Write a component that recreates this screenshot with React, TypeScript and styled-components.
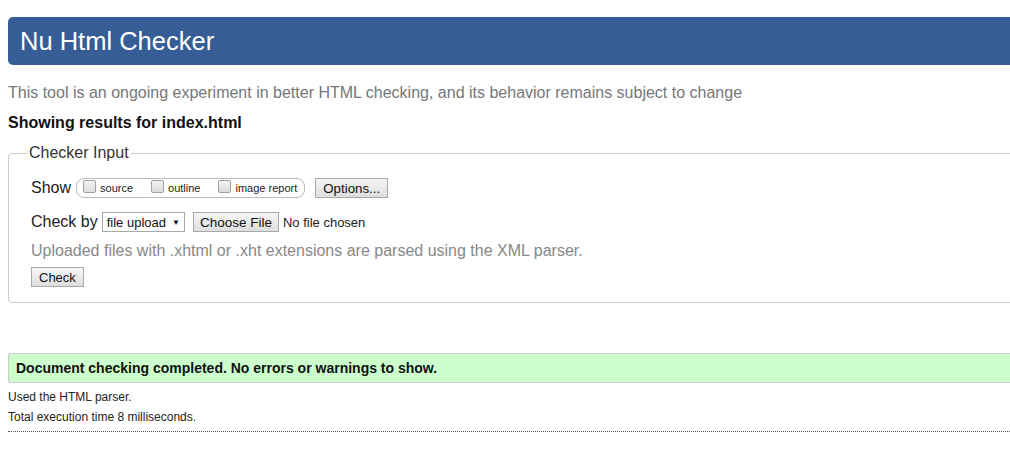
import React from "react";
import styled, { createGlobalStyle } from "styled-components";

const GlobalStyle = createGlobalStyle`
  html, body {
    margin: 0;
    padding: 0;
    background: #fff;
    overflow: hidden;
  }
  body {
    font-family: "Liberation Sans", Arial, sans-serif;
    color: #222;
  }
`;

const Page = styled.div`
  width: 1040px;
  padding: 17px 0 0 8px;
`;

const Header = styled.h1`
  margin: 0;
  height: 48px;
  background: #365d95;
  border-radius: 5px;
  color: #fff;
  font-size: 25.5px;
  font-weight: normal;
  line-height: 48px;
  padding-left: 12px;
`;

const Intro = styled.p`
  margin: 18px 0 0;
  color: #777;
  font-size: 16px;
  line-height: 20px;
`;

const Results = styled.p`
  margin: 10px 0 0;
  font-size: 16px;
  font-weight: bold;
  line-height: 20px;
  color: #111;
`;

const Fieldset = styled.fieldset`
  margin: 11px 0 0;
  padding: 4px 22px 15px;
  border: 1px solid #ccc;
  border-radius: 4px;
  min-width: 0;
`;

const Legend = styled.legend`
  padding: 0 2px;
  margin-left: -4px;
  font-size: 16px;
  color: #333;
  line-height: 18px;
`;

const Row = styled.div<{ $top?: number }>`
  display: flex;
  align-items: center;
  gap: 4px;
  margin-top: ${(p) => p.$top ?? 0}px;
  font-size: 16px;
  color: #222;
`;

const Label = styled.span`
  font-size: 16px;
`;

const Pill = styled.span`
  display: inline-flex;
  align-items: center;
  gap: 18px;
  height: 18px;
  padding: 0 7px 0 6px;
  margin-left: 1px;
  border: 1px solid #bbb;
  border-radius: 8px;
  font-size: 11px;
`;

const Option = styled.label`
  display: inline-flex;
  align-items: center;
  gap: 4px;
`;

const Box = styled.span`
  display: inline-block;
  width: 11px;
  height: 11px;
  border: 1px solid #a0a0a0;
  border-radius: 2px;
  background: linear-gradient(#f4f4f4, #dcdcdc);
  position: relative;
  top: -2px;
`;

const Button = styled.button<{ $left?: number; $size?: number; $pad?: number }>`
  font-family: "Liberation Sans", Arial, sans-serif;
  font-size: ${(p) => p.$size ?? 13}px;
  color: #111;
  height: 20px;
  padding: 0 ${(p) => p.$pad ?? 7}px;
  border: 1px solid #a9a9a9;
  border-radius: 0;
  background: linear-gradient(#f6f6f6, #dedede);
  margin-left: ${(p) => p.$left ?? 0}px;
`;

const Select = styled.span`
  display: inline-flex;
  align-items: center;
  gap: 6px;
  height: 18px;
  padding: 0 4px;
  border: 1px solid #a9a9a9;
  font-size: 13px;
  color: #111;
  background: #fff;
`;

const Caret = styled.span`
  font-size: 8px;
`;

const Small = styled.span`
  font-size: 13px;
`;

const Hint = styled.p`
  margin: 9px 0 0;
  color: #888;
  font-size: 16px;
  line-height: 20px;
`;

const Success = styled.div`
  margin-top: 50px;
  height: 28px;
  background: #ccffcc;
  border: 1px solid #ccc;
  border-right: none;
  border-radius: 3px 0 0 3px;
  font-size: 14px;
  font-weight: bold;
  line-height: 28px;
  padding-left: 7px;
  color: #111;
`;

const Details = styled.div`
  margin-top: 4px;
`;

const Detail = styled.p`
  margin: 0;
  font-size: 12px;
  line-height: 20px;
  color: #222;
`;

const Rule = styled.hr`
  margin: 4px 0 0;
  border: none;
  border-top: 1px dotted #555;
`;

export default function App() {
  return (
    <>
      <GlobalStyle />
      <Page>
        <Header>Nu Html Checker</Header>
        <Intro>
          This tool is an ongoing experiment in better HTML checking, and its behavior remains
          subject to change
        </Intro>
        <Results>Showing results for index.html</Results>
        <Fieldset>
          <Legend>Checker Input</Legend>
          <Row $top={12}>
            <Label>Show</Label>
            <Pill>
              <Option>
                <Box />
                source
              </Option>
              <Option>
                <Box />
                outline
              </Option>
              <Option>
                <Box />
                image report
              </Option>
            </Pill>
            <Button $left={6} $size={13.3} $pad={7}>
              Options...
            </Button>
          </Row>
          <Row $top={14}>
            <Label>Check by</Label>
            <Select>
              file upload <Caret>▼</Caret>
            </Select>
            <Button $left={4} $size={13.5} $pad={6}>
              Choose File
            </Button>
            <Small>No file chosen</Small>
          </Row>
          <Hint>Uploaded files with .xhtml or .xht extensions are parsed using the XML parser.</Hint>
          <Row $top={6}>
            <Button>Check</Button>
          </Row>
        </Fieldset>
        <Success>Document checking completed. No errors or warnings to show.</Success>
        <Details>
          <Detail>Used the HTML parser.</Detail>
          <Detail>Total execution time 8 milliseconds.</Detail>
        </Details>
        <Rule />
      </Page>
    </>
  );
}
